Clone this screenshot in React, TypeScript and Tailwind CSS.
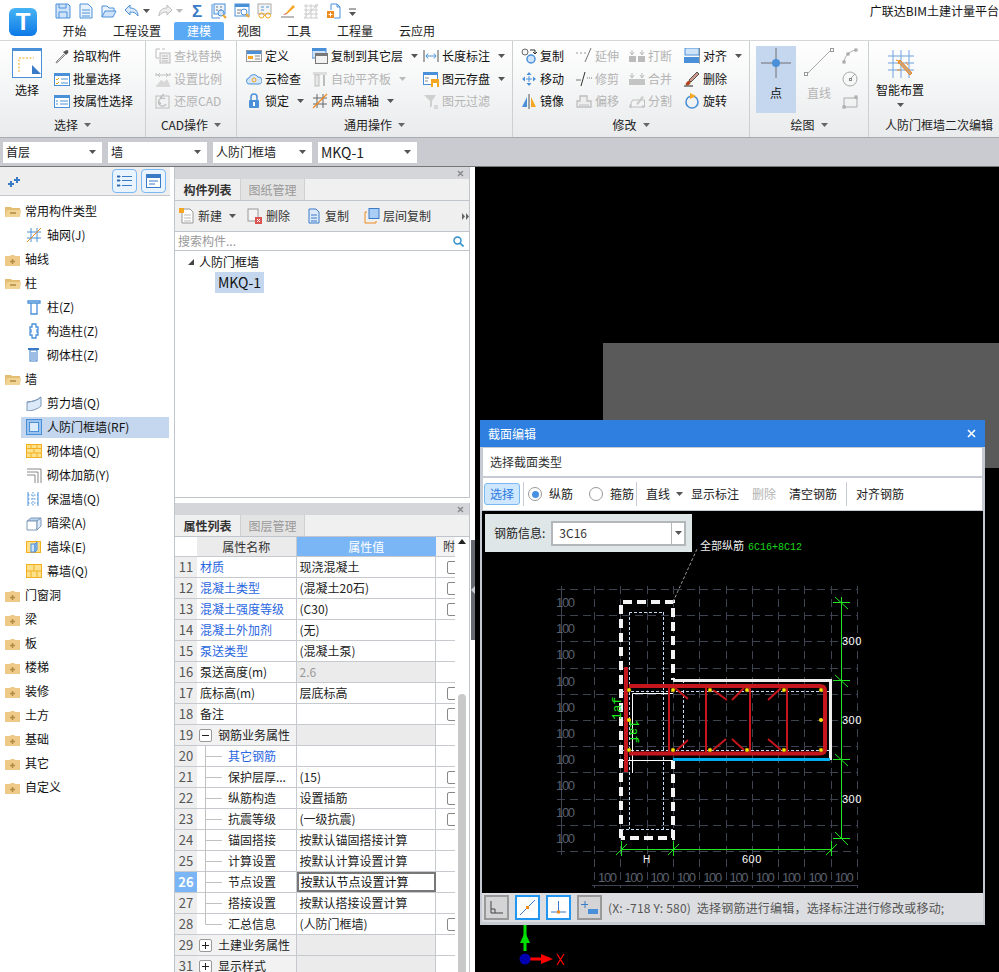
import React from "react";

type N = React.ReactNode;
const S = ({ w = 16, h = 16, children }: { w?: number; h?: number; children: N }) => (
  <svg width={w} height={h} viewBox={`0 0 ${w} ${h}`} fill="none" className="block shrink-0">{children}</svg>
);
const B = "#4a90d9";
const O = "#f5a623";
const G = "#bdbdbd";
const Caret = ({ c = "#555" }: { c?: string }) => (
  <svg width="7" height="4" viewBox="0 0 7 4" className="block shrink-0"><path d="M0 0h7L3.5 4z" fill={c} /></svg>
);

/* quick access */
const qa = {
  save: <S><path d="M1 1h12l2 2v12H1z" fill="#cfe3f8" stroke={B} /><path d="M4 1v4h7V1M4 15v-6h8v6" stroke={B} /></S>,
  file: <S><path d="M2 1h8l4 4v10H2z" fill="#eaf3fc" stroke={B} /><path d="M4 7h8M4 10h8M4 13h8" stroke={B} /></S>,
  open: <S><path d="M1 14V3h5l2 2h5v3" stroke={B} fill="#eaf3fc" /><path d="M1 14l3-6h11l-3 6z" fill="#cfe3f8" stroke={B} /></S>,
  undo: <S><path d="M6 2L1 7l5 5V9c4 0 6 1 8 4 0-5-3-8-8-8z" fill="#dbe9f8" stroke={B} /></S>,
  redo: <S><path d="M10 2l5 5-5 5V9c-4 0-6 1-8 4 0-5 3-8 8-8z" fill="#eee" stroke={G} /></S>,
  report: <S><path d="M1 1v14h8" stroke={B} /><rect x="3" y="1" width="11" height="10" fill="#eaf3fc" stroke={B} /><path d="M5 4h2M9 4h2M5 7h2M9 7h2" stroke="#777" /><circle cx="10" cy="10" r="3" fill="#cfe3f8" stroke={B} /><path d="M12 12l3 3" stroke={O} strokeWidth="2" /></S>,
  view: <S><rect x="1" y="1" width="14" height="12" fill="#fff" stroke={B} /><rect x="1" y="1" width="14" height="3" fill={B} /><path d="M3 7h4M3 10h3" stroke="#777" /><circle cx="10" cy="9" r="3" fill="#fff" stroke={B} /><path d="M12 11l3 3" stroke={O} strokeWidth="2" /></S>,
  glass: <S><rect x="1" y="1" width="13" height="10" fill="#f4f4f4" stroke="#aaa" /><path d="M4 4h3M9 4h3M4 7h3" stroke={B} /><circle cx="4.5" cy="12.5" r="2.5" stroke={O} /><circle cx="11" cy="12.5" r="2.5" stroke={O} /><path d="M7 12.5h1.500" stroke={O} /></S>,
  pen: <S><path d="M6 10l7-8 2 2-8 7z" fill={O} /><path d="M1 14h13" stroke="#777" /><path d="M3 12l3-2 1 1z" fill="#c33" /></S>,
  gridd: <S><path d="M1 3h14M1 7h14M1 11h14M1 15h14M3 1v14M8 1v14M13 1v14M1 15L15 1" stroke="#ccc" /></S>,
  add: <S><path d="M5 1h6l3 3v11H8" stroke={B} /><path d="M5 1v6" stroke={B} /><path d="M11 1v3h3" stroke={B} /><rect x="1" y="8" width="7" height="7" fill="#ef8a1e" /><path d="M4.500 9.500v4M2.500 11.500h4" stroke="#fff" /></S>,
};

/* ribbon */
const ri = {
  pick: <S><path d="M10 6L3 13l-1 2 2-1 7-7" fill="#ddd" stroke="#888" /><path d="M9 4l3 3 2-2c1-1 0-3-1-3s-2 1-2 1z" fill="#555" /></S>,
  batch: <S><rect x="0.500" y="2.500" width="15" height="12" fill="#fff" stroke={B} /><rect x="0" y="2" width="16" height="3" fill={B} /><path d="M2 8l1 1 2-2M2 12l1 1 2-2" stroke={O} /><path d="M7 8h7M7 12h7" stroke={B} /></S>,
  attr: <S><rect x="0.500" y="2.500" width="15" height="12" fill="#fff" stroke={B} /><rect x="0" y="2" width="16" height="3" fill={B} /><path d="M2 8h2M2 11h2M6 8h8M6 11h8" stroke={B} /></S>,
  find: <S><path d="M1 1h4M7 1h3" stroke={G} /><rect x="5" y="5" width="10" height="10" fill="#eee" stroke={G} /><path d="M7 8h6M7 10.500h6M7 13h6" stroke={G} /><path d="M1 1v9h3" stroke={G} /></S>,
  scale: <S><path d="M1 4h14M1 15h14M1 2v3M15 2v3" stroke={G} /><path d="M2 14l4-5 3 2 3-3 3 6z" fill="#d8d8d8" /><path d="M5 2L3 4l2 2M11 2l2 2-2 2" stroke={G} /></S>,
  restore: <S><rect x="1" y="3" width="13" height="12" stroke={G} /><path d="M10 6a4 4 0 1 0 1 5M4 9l2 2M9 1L5 5" stroke={G} strokeWidth="1.300" /></S>,
  define: <S><rect x="0.500" y="2.500" width="15" height="11" fill="#f7f7f7" stroke="#999" /><rect x="1" y="3" width="14" height="3" fill={B} /><rect x="2" y="8" width="5" height="3" fill={O} /><path d="M9 8h5M9 11h5" stroke="#888" /></S>,
  cloud: <S><path d="M4 13a3 3 0 0 1-1-6 5 5 0 0 1 9-1 3.500 3.500 0 0 1 1 7z" fill="#d5e6f8" stroke={B} /><circle cx="8" cy="9" r="2" stroke={O} /></S>,
  lock: <S><rect x="3" y="7" width="10" height="8" rx="1" fill={B} /><path d="M5 7V4a3 3 0 0 1 6 0v3" stroke={B} strokeWidth="1.500" /><rect x="7" y="9" width="2" height="4" fill="#fff" /></S>,
  copyf: <S><rect x="0" y="0" width="14" height="10" fill="#cfe3f8" stroke={B} /><rect x="0" y="0" width="14" height="3" fill={B} /><rect x="3.500" y="5.500" width="12" height="10" fill="#f2f2f2" stroke="#777" /><rect x="4" y="6" width="11" height="2" fill="#777" /></S>,
  auto: <S><rect x="1" y="1" width="14" height="3" fill="#ddd" /><rect x="3" y="4" width="4" height="11" fill="#e8e8e8" stroke={G} /><path d="M12 4v11" stroke={G} strokeWidth="2" /></S>,
  two: <S><path d="M1 5h14M1 11h14M5 1v14M11 1v14" stroke="#666" /><path d="M1 15L15 1" stroke="#ef8a1e" strokeWidth="1.200" /></S>,
  dim: <S><path d="M1 2v12M15 2v12" stroke="#555" /><path d="M3 8h10M5 5.500L3 8l2 2.500M11 5.500L13 8l-2 2.500" stroke={B} /></S>,
  store: <S><rect x="0.500" y="1.500" width="14" height="12" fill="#fff" stroke={B} /><rect x="0" y="1" width="15" height="3" fill={B} /><path d="M2 7h4M2 10h3" stroke="#888" /><rect x="8" y="8" width="8" height="8" fill={O} /><rect x="10" y="12" width="4" height="4" fill="#fff" /></S>,
  filter: <S><path d="M1 2h12L9 8v5l-2 2V8z" fill="#cfcfcf" /><path d="M11 13h4M11 15h4" stroke={G} /></S>,
  copy: <S><circle cx="4" cy="4" r="3" stroke="#666" fill="#f5f5f5" /><circle cx="10" cy="11" r="4" fill="#cfe3f8" stroke={B} strokeWidth="1.500" /><path d="M9 2h5v4M12 4l2 2 2-2" stroke="#333" /></S>,
  move: <S><path d="M8 1l2.500 3h-5zM8 15l2.500-3h-5zM1 8l3-2.500v5zM15 8l-3-2.500v5z" fill={B} /><path d="M5 8h6M8 5v6" stroke={B} /></S>,
  mirror: <S><path d="M1 14L6 4v10z" fill={B} /><path d="M15 14L10 4v10z" fill={O} /><path d="M8 1v15" stroke="#555" /></S>,
  extend: <S><path d="M0 5h2M4 5h2M8 5h2" stroke="#999" /><path d="M15 0L9 14" stroke="#777" /></S>,
  trim: <S><path d="M0 9h5M11 7h1M13 7h1M15 7h1" stroke="#777" /><path d="M9 1L5 15" stroke="#333" /></S>,
  offset: <S><path d="M1 14V8h3V3h7v5h4v6z" fill="#eee" stroke={G} strokeWidth="1.300" /><path d="M3 12h10" stroke={G} /></S>,
  brk: <S><rect x="0" y="8" width="7" height="6" fill="#bbb" /><rect x="9" y="8" width="7" height="6" fill="#bbb" /><path d="M3 2v5M1 4l2 3 2-3M13 2v5M11 4l2 3 2-3" stroke="#bbb" /></S>,
  merge: <S><rect x="0" y="8" width="16" height="6" fill="#c4c4c4" /><path d="M3 2v5M1 4l2 3 2-3M13 2v5M11 4l2 3 2-3" stroke="#bbb" /></S>,
  split: <S><path d="M0.500 14l3-7h12v7z" stroke={G} fill="#f4f4f4" /><path d="M7 11l6-8 2 1-6 8z" fill="#ccc" /><path d="M2 15V11M14 15V12" stroke={G} /></S>,
  align: <S><rect x="1" y="0" width="14" height="7" fill="#cfe3f8" stroke={B} /><rect x="0" y="9" width="15" height="6" fill={B} /><path d="M16 0v16" stroke="#444" /></S>,
  del: <S><path d="M5 9l8-8 2 2-8 8z" fill="#c98" stroke="#555" /><path d="M3 11c2-3 5 0 3 2-1 1-3 2-4 1s0-2 1-3z" fill="#b5461e" /><path d="M0 15h9" stroke="#222" /></S>,
  rotate: <S><circle cx="8" cy="9" r="6" stroke={B} strokeWidth="1.600" /><path d="M6 0l6 3-6 3z" fill={O} /></S>,
  point: <S w={30} h={30}><path d="M0 15h30M15 0v30" stroke="#6f6f6f" /><circle cx="15" cy="15" r="4" fill={B} /></S>,
  line: <S w={32} h={32}><path d="M4 28L28 4" stroke="#aaa" /><rect x="1.500" y="26.500" width="3" height="3" fill="#fff" stroke="#999" /><rect x="27.500" y="2.500" width="3" height="3" fill="#fff" stroke="#999" /></S>,
  arc: <S><path d="M2 14C3 7 8 3 14 2" stroke="#aaa" /><rect x="1" y="13" width="2" height="2" stroke="#999" /><rect x="13" y="1" width="2" height="2" stroke="#999" /><rect x="5" y="5" width="2" height="2" stroke="#999" /></S>,
  circle: <S><circle cx="8" cy="8" r="7" stroke="#aaa" /><rect x="7.500" y="7.500" width="2" height="2" stroke="#888" /><path d="M9 7l4-4" stroke="#aaa" /></S>,
  rect: <S><path d="M2 5h13v9H2z" stroke="#aaa" /><rect x="1" y="13" width="2" height="2" fill="#fff" stroke="#999" /><rect x="13" y="3" width="2" height="2" fill="#fff" stroke="#999" /></S>,
  smart: <S w={30} h={30}><path d="M3 7h26M3 14h26M3 21h26M8 1v28M16 1v28M24 1v28" stroke="#6fa3de" /><path d="M13 13l12 13 2-2-12-13z" fill="#c9a27f" stroke="#ef8a1e" /><path d="M11 11l3 1-1 3M21 13l2 3M12 21h4" stroke="#ef8a1e" /></S>,
  select: (
    <S w={30} h={30}>
      <rect x="0.500" y="0.500" width="29" height="29" fill="#fff" stroke={B} />
      <rect x="0" y="0" width="30" height="3" fill={B} />
      <path d="M7 24V10h15" stroke={O} strokeDasharray="2 1.500" />
      <path d="M20 17l9 9h-9z" fill="#3a7bc8" />
    </S>
  ),
};

const Item = ({ icon, label, dis, caret }: { icon: N; label: string; dis?: boolean; caret?: boolean }) => (
  <div className="flex h-[22.5px] items-center gap-[3px]">
    <span className="flex w-[16px] justify-center">{icon}</span>
    <span className={dis ? "text-[12px] leading-none whitespace-nowrap text-[#b4b4b4]" : "text-[12px] leading-none whitespace-nowrap text-[#111]"}>{label}</span>
    {caret && <span className="ml-[5px]"><Caret c={dis ? "#bbb" : "#555"} /></span>}
  </div>
);

const Group = ({ w, label, children }: { w: string; label: string; children: N }) => (
  <div className={`${w} flex flex-col border-r border-[#cdd0d2]`}>
    <div className="flex h-[73px]">{children}</div>
    <div className="flex h-[22px] items-center justify-center gap-[6px] text-[12px] text-[#222]">
      <span>{label}</span>
      <Caret c="#666" />
    </div>
  </div>
);

const Combo = ({ w, t, big }: { w: string; t: string; big?: boolean }) => (
  <div className={`${w} flex h-[21px] items-center justify-between bg-white pl-[3px] pr-[6px] text-[#222] ${big ? "text-[14px]" : "text-[12px]"}`}>
    <span>{t}</span>
    <Caret />
  </div>
);

/* tree */
const FolderOpen = () => (
  <S w={16} h={13}><path d="M0 2h6l1 1h8v3H3L1 12H0z" fill="#e2bd72" /><path d="M0 12l2-7h14l-1 7H0z" fill="#f1d394" /><path d="M5 8h6" stroke="#b08a40" strokeWidth="1.500" /></S>
);
const FolderClosed = () => (
  <S w={15} h={13}><path d="M0 3h5l1-1h3l1 1h5v10H0z" fill="#eec987" /><path d="M7.500 6v5M5 8.500h5" stroke="#b08a40" strokeWidth="1.400" /></S>
);
const ti = {
  grid: <S><path d="M1 5h14M1 11h14M5 1v14M11 1v14" stroke={B} /><path d="M1 15L15 1" stroke="#ef8a1e" /></S>,
  col: <S><path d="M2 2h12v2H2zM5 4h6v11H5z" fill="#fff" stroke={B} strokeWidth="1.300" /></S>,
  gz: <S><path d="M6 1h4v3h2v3h-1v2h1v3h-2v3H6v-3H4V9h1V7H4V4h2z" fill="#fff" stroke={B} strokeWidth="1.300" /></S>,
  qt: <S><rect x="2" y="1" width="11" height="2" fill="#3a7bc8" /><rect x="4" y="3" width="7" height="11" fill="#fff" stroke="#3a7bc8" /><path d="M5 6h5M5 8h5M5 10h5M5 12h5" stroke="#3a7bc8" /></S>,
  shear: <S><path d="M1 7c5 0 11-2 14-5v9c-3 3-9 5-14 5z" fill="#dbe9f8" stroke="#7d98b8" /><path d="M1 7c5 0 11-2 14-5" stroke="#7d98b8" /></S>,
  rf: <S><rect x="0.500" y="0.500" width="15" height="15" fill="#9cc3ee" stroke={B} /><rect x="3.500" y="3.500" width="9" height="9" fill="#dcebfa" stroke={B} /></S>,
  brick: <S><rect x="0.500" y="1.500" width="15" height="13" fill="#fde08c" stroke="#f2b021" /><path d="M1 5.500h14M1 10h14M5 1v4M11 1v4M8 6v4M5 10v4M11 10v4" stroke="#f2b021" /></S>,
  reinf: <S><path d="M1 2h14v14M1 5h11v11M1 8h8v8" stroke="#888" /></S>,
  ins: <S><path d="M2 1v14" stroke={B} /><path d="M12 1v14" stroke={B} /><path d="M7 1v14M2 4h10M2 8h10M2 12h10" stroke={B} strokeDasharray="1.500 1.500" /></S>,
  beam: <S><path d="M1 6l4-3h10l-4 3z" fill="#bcd6f2" stroke="#7d98b8" /><path d="M1 6h10v9H1z" fill="#fff" stroke="#7d98b8" /><path d="M11 6l4-3v8l-4 4z" fill="#dbe9f8" stroke="#7d98b8" /></S>,
  pier: <S><rect x="0.500" y="2.500" width="14" height="11" fill="#fde08c" stroke="#f2b021" /><rect x="5" y="5" width="4" height="8" fill="#cfe3f8" stroke={B} /><path d="M9 5l2-2v8l-2 2z" fill="#9cc3ee" stroke={B} /></S>,
  curtain: <S><rect x="0.500" y="1.500" width="15" height="13" fill="#fde08c" stroke="#f2b021" /><path d="M1 8h14M8 2v6" stroke="#f2b021" /><path d="M5 8v6M11 8v6" stroke="#f2b021" /></S>,
};
type T = { t: string; f?: "o" | "c"; i?: N; sel?: boolean };
const tree: T[] = [
  { t: "常用构件类型", f: "o" },
  { t: "轴网(J)", i: ti.grid },
  { t: "轴线", f: "c" },
  { t: "柱", f: "o" },
  { t: "柱(Z)", i: ti.col },
  { t: "构造柱(Z)", i: ti.gz },
  { t: "砌体柱(Z)", i: ti.qt },
  { t: "墙", f: "o" },
  { t: "剪力墙(Q)", i: ti.shear },
  { t: "人防门框墙(RF)", i: ti.rf, sel: true },
  { t: "砌体墙(Q)", i: ti.brick },
  { t: "砌体加筋(Y)", i: ti.reinf },
  { t: "保温墙(Q)", i: ti.ins },
  { t: "暗梁(A)", i: ti.beam },
  { t: "墙垛(E)", i: ti.pier },
  { t: "幕墙(Q)", i: ti.curtain },
  { t: "门窗洞", f: "c" },
  { t: "梁", f: "c" },
  { t: "板", f: "c" },
  { t: "楼梯", f: "c" },
  { t: "装修", f: "c" },
  { t: "土方", f: "c" },
  { t: "基础", f: "c" },
  { t: "其它", f: "c" },
  { t: "自定义", f: "c" },
];

const PanelHead = () => (
  <div className="flex h-[12px] shrink-0 items-center justify-end bg-[#d5d6da] pr-[5px] text-[#888]">
    <svg width="7" height="7" viewBox="0 0 7 7"><path d="M1 1l5 5M6 1L1 6" stroke="#888" strokeWidth="1.400" /></svg>
  </div>
);
const PanelTabs = ({ a, b }: { a: string; b: string }) => (
  <div className="flex h-[22px] shrink-0 border-b border-[#c0c4cc] bg-[#f0f0f0]">
    <div className="flex w-[65px] items-center justify-center text-[12px] font-bold text-[#333]">{a}</div>
    <div className="flex w-[65px] items-center justify-center border-x border-[#d0d0d0] bg-[#e3e3e3] text-[12px] text-[#999]">{b}</div>
  </div>
);

/* property table */
type R = { n: number; a: string; v?: string; blue?: boolean; cb?: boolean; kind?: "child" | "last" | "open" | "closed"; dis?: boolean; cur?: boolean };
const rows: R[] = [
  { n: 11, a: "材质", v: "现浇混凝土", blue: true, cb: true },
  { n: 12, a: "混凝土类型", v: "(混凝土20石)", blue: true, cb: true },
  { n: 13, a: "混凝土强度等级", v: "(C30)", blue: true, cb: true },
  { n: 14, a: "混凝土外加剂", v: "(无)", blue: true },
  { n: 15, a: "泵送类型", v: "(混凝土泵)", blue: true },
  { n: 16, a: "泵送高度(m)", v: "2.6", dis: true },
  { n: 17, a: "底标高(m)", v: "层底标高", cb: true },
  { n: 18, a: "备注", cb: true },
  { n: 19, a: "钢筋业务属性", kind: "open" },
  { n: 20, a: "其它钢筋", blue: true, kind: "child" },
  { n: 21, a: "保护层厚...", v: "(15)", kind: "child", cb: true },
  { n: 22, a: "纵筋构造", v: "设置插筋", kind: "child", cb: true },
  { n: 23, a: "抗震等级", v: "(一级抗震)", kind: "child", cb: true },
  { n: 24, a: "锚固搭接", v: "按默认锚固搭接计算", kind: "child" },
  { n: 25, a: "计算设置", v: "按默认计算设置计算", kind: "child" },
  { n: 26, a: "节点设置", v: "按默认节点设置计算", kind: "child", cur: true },
  { n: 27, a: "搭接设置", v: "按默认搭接设置计算", kind: "child" },
  { n: 28, a: "汇总信息", v: "(人防门框墙)", kind: "last", cb: true },
  { n: 29, a: "土建业务属性", kind: "closed" },
  { n: 31, a: "显示样式", kind: "closed" },
];
const Box = ({ plus }: { plus?: boolean }) => (
  <span className="ml-[2px] flex h-[13px] w-[13px] shrink-0 items-center justify-center rounded-[2px] border border-[#999] bg-white">
    <svg width="7" height="7" viewBox="0 0 7 7"><path d={plus ? "M0 3.500h7M3.500 0v7" : "M0 3.500h7"} stroke="#222" /></svg>
  </span>
);
const Row = ({ r }: { r: R }) => {
  const group = r.kind === "open" || r.kind === "closed";
  const child = r.kind === "child" || r.kind === "last";
  return (
    <div className="flex h-[21px] border-b border-[#c6c9cd] text-[12px]">
      <div className={r.cur ? "flex w-[22px] items-center justify-center bg-[#7ab6f5] text-[13px] font-bold text-white" : "flex w-[22px] items-center justify-center bg-[#eeeeee] text-[13px] text-[#555]"}>{r.n}</div>
      <div className={group ? "flex w-[100px] items-center border-r border-[#c6c9cd] bg-[#f2f2f2]" : "flex w-[100px] items-center border-r border-[#c6c9cd] bg-white"}>
        {group && <Box plus={r.kind === "closed"} />}
        {group && <span className="ml-[6px] text-[#222]">{r.a}</span>}
        {child && (
          <svg width="25" height="21" viewBox="0 0 25 21" fill="none" className="shrink-0">
            <path d={r.kind === "last" ? "M8.500 0v10.500H25" : "M8.500 0v21M8.500 10.500H25"} stroke="#c0c0c0" />
          </svg>
        )}
        {!group && <span className={r.blue ? (child ? "ml-[6px] text-[#2a66e0]" : "ml-[3px] text-[#2a66e0]") : child ? "ml-[6px] text-[#222]" : "ml-[3px] text-[#222]"}>{r.a}</span>}
      </div>
      <div className={r.dis || group ? "flex w-[140px] items-center border-r border-[#c6c9cd] bg-[#ebebeb] pl-[3px] text-[#999]" : r.cur ? "flex w-[140px] items-center border-2 border-[#777] bg-white pl-[2px] text-[#111]" : "flex w-[140px] items-center border-r border-[#c6c9cd] bg-white pl-[3px] text-[#222]"}>{r.v}</div>
      <div className="flex w-[19px] items-center overflow-hidden bg-white pl-[11px]">
        {r.cb && <span className="h-[13px] w-[13px] shrink-0 rounded-[2px] border border-[#888]" />}
      </div>
    </div>
  );
};

/* section drawing */
const gy = Array.from({ length: 11 }, (_, i) => 589 + i * 26.2);
const gx = Array.from({ length: 11 }, (_, i) => 594 + i * 26.3);
const GC = "#3d4350";
const LT = "#5a606e";
const Drawing = () => (
  <svg viewBox="482 511 501 382" width="501" height="382" className="block font-['Liberation_Sans',sans-serif]">
    {gy.map((y) => <path key={y} d={`M557 ${Math.round(y) + 0.5}H857`} stroke={GC} strokeDasharray="8 5" />)}
    {gx.map((x) => <path key={x} d={`M${Math.round(x) + 0.5} 586V888`} stroke={GC} strokeDasharray="8 5" />)}
    <path d="M561.500 586V855M592 885.500H857" stroke={GC} />
    {gy.slice(0, 10).map((y, i) => <text key={i} x="556" y={y + 18} fontSize="13" fill={LT} textLength="19">100</text>)}
    {gx.slice(0, 10).map((x, i) => <text key={i} x={x + 4} y="882" fontSize="13" fill={LT} textLength="19">100</text>)}

    <path d="M621 838V602H673V680M673 760V838H621" fill="none" stroke="#f4f4f4" strokeWidth="4" strokeDasharray="9 5" />
    <path d="M629.500 612V829M663.500 612V829M683.500 680V750M629 612.500H663M621 829.500H673M621 691.500H830M621 750.500H830" fill="none" stroke="#c4dcf5" strokeDasharray="3 2" />
    <path d="M673 680.500H830.500V760" fill="none" stroke="#eeeeee" strokeWidth="3" />
    <path d="M621 760.500H673M632.500 773V693.500H673" fill="none" stroke="#fff" />
    <path d="M673 759.500H830" stroke="#00aeef" strokeWidth="3" />

    <path d="M626 667V772" stroke="#c5161d" strokeWidth="4" />
    <path d="M629 686H820Q825 686 825 691V749Q825 753.500 820 753.500H629" fill="none" stroke="#c5161d" strokeWidth="4" />
    <path d="M669 686V753M706 686V753M750 686V753M787 686V753" stroke="#c5161d" strokeWidth="2" />
    <path d="M675 688L688 699M713 690L727 700M744 688L732 700M781 688L768 700M677 750L688 740M713 750L726 739M744 750L732 739M781 750L768 739" stroke="#c5161d" strokeWidth="2" />
    {[629, 673, 710, 747, 784, 821].flatMap((x) => [690, 750].map((y) => <circle key={`${x}-${y}`} cx={x} cy={y} r="2" fill="#ffe400" stroke="#7a6a00" strokeWidth="0.500" />))}
    <circle cx="629" cy="720" r="2" fill="#ffe400" />
    <circle cx="821" cy="720" r="2" fill="#ffe400" />

    <path d="M841.500 597V838M833 602.500H850M833 680.500H850M833 759.500H850M833 838.500H850M835 597L848 609M835 675L848 687M835 754L848 766M835 832L848 845" stroke="#22e622" fill="none" />
    <path d="M621 849.500H831M621.500 841V856M673.500 841V856M831.500 841V856M616 855L627 844M668 855L679 844M826 855L837 844" stroke="#22e622" fill="none" />

    <text x="842" y="645" fontSize="11" fill="#fff" letterSpacing="0.500">300</text>
    <text x="842" y="724" fontSize="11" fill="#fff" letterSpacing="0.500">300</text>
    <text x="842" y="803" fontSize="11" fill="#fff" letterSpacing="0.500">300</text>
    <text x="643" y="863" fontSize="10" fill="#fff">H</text>
    <text x="742" y="863" fontSize="11" fill="#fff" letterSpacing="0.500">600</text>
    <text transform="translate(621 720) rotate(-90)" fontSize="13" fill="#22e622" letterSpacing="0" className="font-['Liberation_Mono',monospace]">1af</text>
    <text transform="translate(630 720) rotate(90)" fontSize="13" fill="#22e622" letterSpacing="0" className="font-['Liberation_Mono',monospace]">1af</text>

    <path d="M673 602L697 549" stroke="#9a9a9a" strokeDasharray="3 2" />
    <text x="700" y="550" fontSize="11" fill="#eee" className="font-['Noto_Sans_CJK_SC',sans-serif]">全部纵筋</text>
    <text x="748" y="550" fontSize="10" fill="#18d818" letterSpacing="0" className="font-['Liberation_Mono',monospace]">6C16+8C12</text>
  </svg>
);

const SB = ({ on, children }: { on?: boolean; children: N }) => (
  <div className={on ? "flex h-[25px] w-[25px] items-center justify-center border-2 border-[#2196f3] bg-white" : "flex h-[25px] w-[25px] items-center justify-center border-2 border-[#999] bg-[#d4d4d6]"}>{children}</div>
);
const Radio = ({ on }: { on?: boolean }) => (
  <span className="flex h-[14px] w-[14px] items-center justify-center rounded-full border border-[#999] bg-white">
    {on && <span className="h-[7px] w-[7px] rounded-full bg-[#4a90e2]" />}
  </span>
);
const Div = () => <span className="block h-[24px] w-px bg-[#c8ccd4]" />;

export default function App() {
  return (
    <div className="relative flex h-[972px] w-[999px] flex-col overflow-hidden bg-white font-['Noto_Sans_CJK_SC','Noto_Sans',sans-serif] text-[12px]">
      {/* title + tabs */}
      <div className="flex h-[41px] shrink-0 border-b border-[#d4d6d8]">
        <div className="flex w-[46px] justify-center pt-[8px]">
          <div className="flex h-[28px] w-[28px] items-center justify-center rounded-[6px] bg-gradient-to-b from-[#46b4f4] to-[#0a78e6] font-['Liberation_Sans',sans-serif] text-[24px] font-bold leading-none text-white">T</div>
        </div>
        <div className="flex flex-1 flex-col">
          <div className="flex h-[22px] items-center">
            <div className="ml-[9px] flex items-center gap-[7px]">
              {qa.save}{qa.file}{qa.open}
              <span className="flex w-[26px] items-center gap-[3px]">{qa.undo}<Caret /></span>
              <span className="flex w-[26px] items-center gap-[3px]">{qa.redo}<Caret c="#bbb" /></span>
              <span className="flex w-[14px] justify-center font-['Liberation_Sans',sans-serif] text-[17px] font-bold leading-none text-[#3a7bc8]">Σ</span>
              {qa.report}{qa.view}{qa.glass}{qa.pen}{qa.gridd}{qa.add}
              <svg width="7" height="9" viewBox="0 0 7 9"><path d="M0 2h7" stroke="#555" /><path d="M0 5h7L3.500 9z" fill="#555" /></svg>
            </div>
            <span className="ml-auto whitespace-nowrap text-[12px] text-[#111]">广联达BIM土建计量平台</span>
          </div>
          <div className="flex h-[18px] items-center text-[12px] text-[#222]">
            <span className="w-[57px] text-center">开始</span>
            <span className="w-[68px] text-center">工程设置</span>
            <span className="ml-[3px] flex h-[18px] w-[50px] items-center justify-center rounded-t-[2px] bg-[#5aa9f5] text-white">建模</span>
            <span className="w-[50px] text-center">视图</span>
            <span className="w-[50px] text-center">工具</span>
            <span className="w-[62px] text-center">工程量</span>
            <span className="w-[62px] text-center">云应用</span>
          </div>
        </div>
      </div>

      {/* ribbon */}
      <div className="flex h-[97px] shrink-0 border-b border-[#a8abae] bg-gradient-to-b from-white to-[#e9ebec]">
        <Group w="w-[146px]" label="选择">
          <div className="flex w-[54px] flex-col items-center pt-[7px]">
            {ri.select}
            <span className="mt-[3px] text-[12px] text-[#111]">选择</span>
          </div>
          <div className="pt-[4px]">
            <Item icon={ri.pick} label="拾取构件" />
            <Item icon={ri.batch} label="批量选择" />
            <Item icon={ri.attr} label="按属性选择" />
          </div>
        </Group>
        <Group w="w-[91px]" label="CAD操作">
          <div className="pl-[9px] pt-[4px]">
            <Item dis icon={ri.find} label="查找替换" />
            <Item dis icon={ri.scale} label="设置比例" />
            <Item dis icon={ri.restore} label="还原CAD" />
          </div>
        </Group>
        <Group w="w-[276px]" label="通用操作">
          <div className="w-[75px] pl-[9px] pt-[4px]">
            <Item icon={ri.define} label="定义" />
            <Item icon={ri.cloud} label="云检查" />
            <Item icon={ri.lock} label="锁定" caret />
          </div>
          <div className="w-[111px] pt-[4px]">
            <Item icon={ri.copyf} label="复制到其它层" caret />
            <Item dis icon={ri.auto} label="自动平齐板" caret />
            <Item icon={ri.two} label="两点辅轴" caret />
          </div>
          <div className="pt-[4px]">
            <Item icon={ri.dim} label="长度标注" caret />
            <Item icon={ri.store} label="图元存盘" caret />
            <Item dis icon={ri.filter} label="图元过滤" />
          </div>
        </Group>
        <Group w="w-[237px]" label="修改">
          <div className="w-[63px] pl-[8px] pt-[4px]">
            <Item icon={ri.copy} label="复制" />
            <Item icon={ri.move} label="移动" />
            <Item icon={ri.mirror} label="镜像" />
          </div>
          <div className="w-[53px] pt-[4px]">
            <Item dis icon={ri.extend} label="延伸" />
            <Item dis icon={ri.trim} label="修剪" />
            <Item dis icon={ri.offset} label="偏移" />
          </div>
          <div className="w-[55px] pt-[4px]">
            <Item dis icon={ri.brk} label="打断" />
            <Item dis icon={ri.merge} label="合并" />
            <Item dis icon={ri.split} label="分割" />
          </div>
          <div className="pt-[4px]">
            <Item icon={ri.align} label="对齐" caret />
            <Item icon={ri.del} label="删除" />
            <Item icon={ri.rotate} label="旋转" />
          </div>
        </Group>
        <Group w="w-[119px]" label="绘图">
          <div className="ml-[6px] mt-[5px] flex h-[67px] w-[40px] flex-col items-center bg-[#c5d7ee] pt-[2px]">
            {ri.point}
            <span className="mt-[6px] text-[12px] text-[#111]">点</span>
          </div>
          <div className="ml-[7px] flex w-[32px] flex-col items-center pt-[5px]">
            {ri.line}
            <span className="mt-[6px] text-[12px] text-[#b4b4b4]">直线</span>
          </div>
          <div className="ml-[7px] pt-[4px]">
            <div className="flex h-[22.5px] items-center">{ri.arc}</div>
            <div className="flex h-[22.5px] items-center">{ri.circle}</div>
            <div className="flex h-[22.5px] items-center">{ri.rect}</div>
          </div>
        </Group>
        <div className="flex flex-1 flex-col">
          <div className="flex h-[73px] w-[62px] flex-col items-center pt-[8px]">
            {ri.smart}
            <span className="mt-[1px] whitespace-nowrap text-[12px] leading-[20px] text-[#111]">智能布置</span>
            <span className="mt-[3px]"><Caret /></span>
          </div>
          <div className="flex h-[22px] items-center pl-[16px] text-[12px] whitespace-nowrap text-[#222]">人防门框墙二次编辑</div>
        </div>
      </div>

      {/* combo bar */}
      <div className="flex h-[29px] shrink-0 items-center gap-[6px] border-b border-[#777] bg-[#c9cbd0] pl-[3px]">
        <Combo w="w-[99px]" t="首层" />
        <Combo w="w-[99px]" t="墙" />
        <Combo w="w-[99px]" t="人防门框墙" />
        <Combo w="w-[99px]" t="MKQ-1" big />
      </div>

      {/* body */}
      <div className="flex min-h-0 flex-1">
        {/* left tree */}
        <div className="flex w-[174px] shrink-0 flex-col bg-white">
          <div className="flex h-[29px] w-[170px] shrink-0 items-center border-b border-[#c4c7cb] bg-[#eeeeee] pl-[7px]">
            <svg width="13" height="11" viewBox="0 0 13 11"><path d="M4 5v6M1 8h6M10 1v6M7 4h6" stroke="#3a7bc8" strokeWidth="2" /></svg>
            <span className="ml-[92px] flex h-[24px] w-[25px] items-center justify-center rounded-[4px] border border-[#79b8f3] bg-[#e9f4fe]">
              <svg width="15" height="14" viewBox="0 0 15 14"><path d="M0 2h3v1H0zM0 6h3v1H0zM0 11h3v1H0zM5 2.500h10M5 6.500h10M5 11.500h10" stroke="#3a7bc8" /></svg>
            </span>
            <span className="ml-[4px] flex h-[24px] w-[25px] items-center justify-center rounded-[4px] border border-[#79b8f3] bg-[#e9f4fe]">
              <svg width="15" height="14" viewBox="0 0 15 14"><rect x="0.500" y="0.500" width="14" height="13" fill="#fff" stroke="#3a7bc8" /><rect x="0" y="0" width="15" height="4" fill="#3a7bc8" /><path d="M3 7h9M3 10h6" stroke="#3a7bc8" /></svg>
            </span>
          </div>
          <div className="mt-[3px] flex-1 overflow-hidden">
            {tree.map((n) => (
              <div key={n.t} className="flex h-[24px] w-[169px] items-center">
                {n.f ? (
                  <div className="flex items-center pl-[5px]">
                    <span className="flex w-[20px]">{n.f === "o" ? <FolderOpen /> : <FolderClosed />}</span>
                    <span className="text-[12px] text-[#111]">{n.t}</span>
                  </div>
                ) : (
                  <div className={n.sel ? "ml-[21px] flex h-[21px] flex-1 items-center bg-[#c5d7ee] pl-[5px]" : "ml-[21px] flex h-[21px] flex-1 items-center pl-[5px]"}>
                    <span className="flex w-[21px]">{n.i}</span>
                    <span className="text-[12px] whitespace-nowrap text-[#111]">{n.t}</span>
                  </div>
                )}
              </div>
            ))}
          </div>
        </div>

        {/* middle */}
        <div className="flex w-[296px] shrink-0 flex-col border-l border-[#c0c4cc] bg-white">
          <div className="flex h-[331px] shrink-0 flex-col border-b border-r border-[#c0c4cc]">
            <PanelHead />
            <PanelTabs a="构件列表" b="图纸管理" />
            <div className="flex h-[31px] shrink-0 items-center border-b border-[#c0c4cc] bg-[#efefef] pl-[4px] text-[12px] text-[#333]">
              <S><path d="M3 1h8l3 3v11H3z" fill="#fff" stroke="#999" /><path d="M5 7h7M5 10h7M5 13h7" stroke="#bbb" /><rect x="0" y="0" width="5" height="5" fill="#f5a623" /></S>
              <span className="ml-[3px]">新建</span>
              <span className="ml-[7px]"><Caret /></span>
              <span className="ml-[11px]"><S><rect x="1" y="1" width="10" height="12" fill="#f4f4f4" stroke="#999" /><rect x="8" y="9" width="7" height="7" fill="#d9534f" /><path d="M10 11l3 3M13 11l-3 3" stroke="#fff" /></S></span>
              <span className="ml-[3px]">删除</span>
              <span className="ml-[16px]"><S><path d="M3 1h7l3 3v11H3z" fill="#dbe9f8" stroke="#3a7bc8" /><path d="M5 7h6M5 10h6M5 13h6" stroke="#3a7bc8" /></S></span>
              <span className="ml-[3px]">复制</span>
              <span className="ml-[15px]"><S><rect x="5" y="0.500" width="10" height="10" fill="#a9cdf5" stroke="#3a7bc8" /><path d="M3 4H1v11h11v-2" stroke="#ef8a1e" /></S></span>
              <span className="ml-[3px]">层间复制</span>
              <svg width="7" height="7" viewBox="0 0 7 7" className="ml-[31px]"><path d="M0 0l3 3.500L0 7zM4 0l3 3.500L4 7z" fill="#666" /></svg>
            </div>
            <div className="flex h-[19px] shrink-0 items-center justify-between border-b border-[#c0c4cc] pl-[3px] pr-[5px] text-[12px] text-[#999]">
              <span>搜索构件...</span>
              <svg width="11" height="11" viewBox="0 0 11 11"><circle cx="4.500" cy="4.500" r="3.500" stroke="#2b8ccc" strokeWidth="1.400" fill="none" /><path d="M7 7l3.500 3.500" stroke="#2b8ccc" strokeWidth="1.600" /></svg>
            </div>
            <div className="flex-1 pl-[13px]">
              <div className="flex h-[21px] items-center">
                <svg width="6" height="6" viewBox="0 0 6 6"><path d="M6 0v6H0z" fill="#444" /></svg>
                <span className="ml-[5px] text-[12px] text-[#111]">人防门框墙</span>
              </div>
              <div className="ml-[27px] flex h-[21px] w-[49px] items-center justify-center bg-[#c5d7ee] text-[14px] text-[#111]">MKQ-1</div>
            </div>
          </div>
          <div className="mt-[5px] flex min-h-0 flex-1 flex-col overflow-hidden border-r border-[#c0c4cc]">
            <PanelHead />
            <PanelTabs a="属性列表" b="图层管理" />
            <div className="flex min-h-0 flex-1">
              <div className="w-[281px] overflow-hidden">
                <div className="flex h-[20px] border-b border-[#c6c9cd] text-[12px]">
                  <div className="w-[22px] bg-white" />
                  <div className="flex w-[100px] items-center justify-center border-r border-[#c6c9cd] bg-[#ebebeb] text-[#333]">属性名称</div>
                  <div className="flex w-[140px] items-center justify-center bg-[#7ab6f5] text-white">属性值</div>
                  <div className="w-[19px] whitespace-nowrap bg-[#f2f2f2] pl-[7px] text-[#333]">附</div>
                </div>
                {rows.map((r) => <Row key={r.n} r={r} />)}
              </div>
              <div className="flex w-[14px] flex-col items-center bg-white">
                <svg width="8" height="5" viewBox="0 0 8 5" className="mt-[2px]"><path d="M4 0l4 5H0z" fill="#222" /></svg>
                <div className="mt-[150px] w-[8px] flex-1 rounded-t-[4px] bg-[#c9c9c9]" />
              </div>
            </div>
          </div>
        </div>

        {/* gutter */}
        <div className="w-[5px] shrink-0 bg-white pl-px pt-[373px]">
          <div className="flex h-[100px] w-[4px] items-center bg-[#666a70]">
            <svg width="4" height="8" viewBox="0 0 4 8"><path d="M4 0v8L0 4z" fill="#c8ccd0" /></svg>
          </div>
        </div>

        {/* canvas */}
        <div className="relative flex-1 bg-black">
          <div className="absolute left-[128px] right-0 top-[176px] h-[125px] bg-[#5a5a5a]" />
          <div className="absolute left-[5px] top-[253px] flex h-[505px] w-[505px] flex-col bg-[#c6cbd3]">
            <div className="flex h-[27px] shrink-0 items-center justify-between bg-[#2e7fe0] pl-[8px] pr-[9px] text-[12px] text-white">
              <span>截面编辑</span>
              <svg width="9" height="9" viewBox="0 0 9 9"><path d="M1 1l7 7M8 1L1 8" stroke="#fff" strokeWidth="1.600" /></svg>
            </div>
            <div className="mx-[3px] mt-[1px] flex h-[28px] shrink-0 items-center bg-white pl-[7px] text-[12px] text-[#333]">选择截面类型</div>
            <div className="mx-[3px] mt-[2px] flex h-[32px] shrink-0 items-center bg-white text-[12px] text-[#222]">
              <span className="ml-[1px] flex h-[22px] w-[36px] items-center justify-center rounded-[3px] border border-[#79b8f3] bg-[#cfe6ff] text-[#2a7ae0]">选择</span>
              <span className="ml-[3px]"><Div /></span>
              <span className="ml-[4px]"><Radio on /></span>
              <span className="ml-[7px]">纵筋</span>
              <span className="ml-[16px]"><Radio /></span>
              <span className="ml-[7px]">箍筋</span>
              <span className="ml-[2px]"><Div /></span>
              <span className="ml-[9px]">直线</span>
              <span className="ml-[6px]"><Caret /></span>
              <span className="ml-[8px]">显示标注</span>
              <span className="ml-[13px] text-[#b4b4b4]">删除</span>
              <span className="ml-[13px]">清空钢筋</span>
              <span className="ml-[9px]"><Div /></span>
              <span className="ml-[9px]">对齐钢筋</span>
            </div>
            <div className="relative mx-[2px] mt-px h-[382px] shrink-0 bg-black">
              <Drawing />
              <div className="absolute left-[3px] top-[3px] flex h-[38px] w-[207px] items-center bg-[#dfe6e8] pl-[9px] text-[12px] text-[#222]">
                <span>钢筋信息:</span>
                <div className="ml-[6px] flex h-[25px] w-[135px] items-center border-2 border-[#b4b7ba] bg-white">
                  <span className="flex-1 pl-[6px] text-[#333]">3C16</span>
                  <span className="flex h-full w-[13px] items-center justify-center border-l border-[#b4b7ba]"><Caret /></span>
                </div>
              </div>
            </div>
            <div className="mx-[2px] flex h-[29px] shrink-0 items-center gap-[6px] bg-[#dcdde0] pl-[2px] text-[12px] text-[#555]">
              <SB><svg width="13" height="13" viewBox="0 0 13 13"><path d="M1 0v12h12M1 8h4v4" stroke="#444" fill="none" /></svg></SB>
              <SB on><svg width="17" height="17" viewBox="0 0 17 17"><path d="M1 16L16 1" stroke="#3a7bc8" /><rect x="7" y="7" width="3" height="3" fill="#ef8a1e" /></svg></SB>
              <SB on><svg width="17" height="15" viewBox="0 0 17 15"><path d="M1 12h15M8.500 1v11" stroke="#3a7bc8" /><rect x="7" y="10.500" width="3" height="3" fill="#ef8a1e" /></svg></SB>
              <SB><svg width="17" height="14" viewBox="0 0 17 14"><path d="M4 0v7M0 3.500h7" stroke="#3a7bc8" /><rect x="7" y="8" width="10" height="5" fill="#4a90d9" /></svg></SB>
              <span className="whitespace-pre tracking-[0.2px]">(X: -718 Y: 580)  选择钢筋进行编辑，选择标注进行修改或移动;</span>
            </div>
          </div>
          <svg width="50" height="47" viewBox="0 0 50 47" className="absolute left-[40px] top-[758px]">
            <path d="M10 0v26" stroke="#00e000" strokeWidth="3" />
            <path d="M5 18l5-11 5 11z" fill="#00e000" />
            <path d="M12 34h22" stroke="#f00" strokeWidth="3" />
            <path d="M26 29l12 5-12 5z" fill="#f00" />
            <circle cx="10" cy="34" r="5.500" fill="#0000b0" />
            <path d="M42 29l7 11M49 29l-7 11" stroke="#f00" strokeWidth="1.300" />
          </svg>
        </div>
      </div>
    </div>
  );
}
